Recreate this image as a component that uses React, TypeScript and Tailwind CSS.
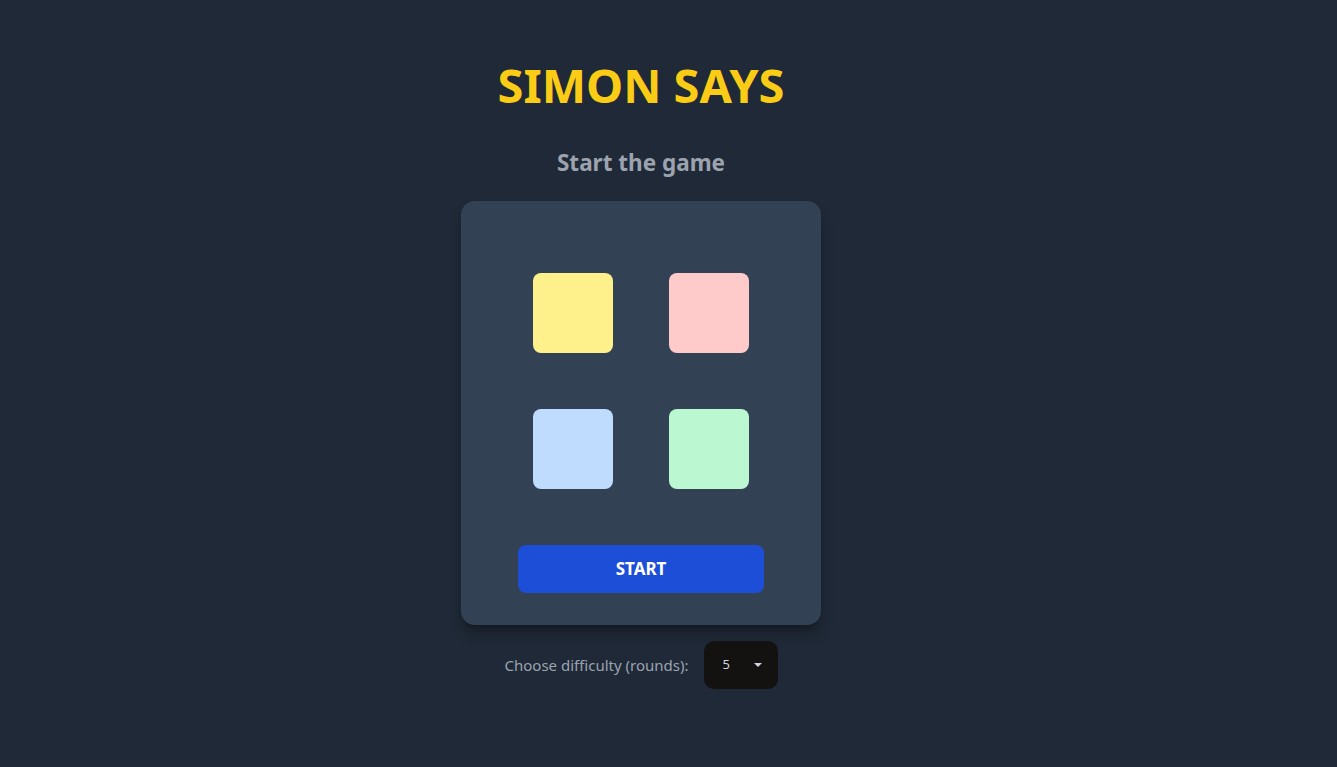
import React from "react";

export default function App() {
  return (
    <div
      className="min-h-screen w-full bg-[#1f2937] flex flex-col items-center pr-[55px]"
      style={{ fontFamily: '"Noto Sans", "Open Sans", sans-serif' }}
    >
      <h1 className="mt-[53px] text-[47px] leading-[64px] font-bold text-[#facc15]">SIMON SAYS</h1>
      <h2 className="mt-[30px] text-[22.5px] leading-[32px] font-bold text-[#9ca3af]">Start the game</h2>
      <div className="mt-[22px] w-[360px] rounded-[14px] bg-[#334155] shadow-[0_10px_15px_-3px_rgba(0,0,0,0.3),0_4px_6px_-4px_rgba(0,0,0,0.3)] px-[57px] pt-[72px] pb-[32px] flex flex-col items-center">
        <div className="grid grid-cols-2 gap-[56px]">
          <div className="w-[80px] h-[80px] rounded-lg bg-[#fef08a]" />
          <div className="w-[80px] h-[80px] rounded-lg bg-[#fecaca]" />
          <div className="w-[80px] h-[80px] rounded-lg bg-[#bfdbfe]" />
          <div className="w-[80px] h-[80px] rounded-lg bg-[#bbf7d0]" />
        </div>
        <button className="mt-[56px] w-[246px] h-[48px] rounded-lg bg-[#1d4ed8] text-white font-bold text-[17px]">
          START
        </button>
      </div>
      <div className="mt-[16px] flex items-center gap-[16px] pl-[1px]">
        <span className="text-[15px] text-[#9ca3af]">Choose difficulty (rounds):</span>
        <div className="w-[74px] h-[48px] rounded-[10px] bg-[#141111] flex items-center pl-[18px] pr-[16px] justify-between">
          <span className="text-[13px] text-[#cbd5e1]">5</span>
          <svg width="8" height="5" viewBox="0 0 8 5">
            <path d="M0 0 L8 0 L4 4 Z" fill="#cbd5e1" />
          </svg>
        </div>
      </div>
    </div>
  );
}
